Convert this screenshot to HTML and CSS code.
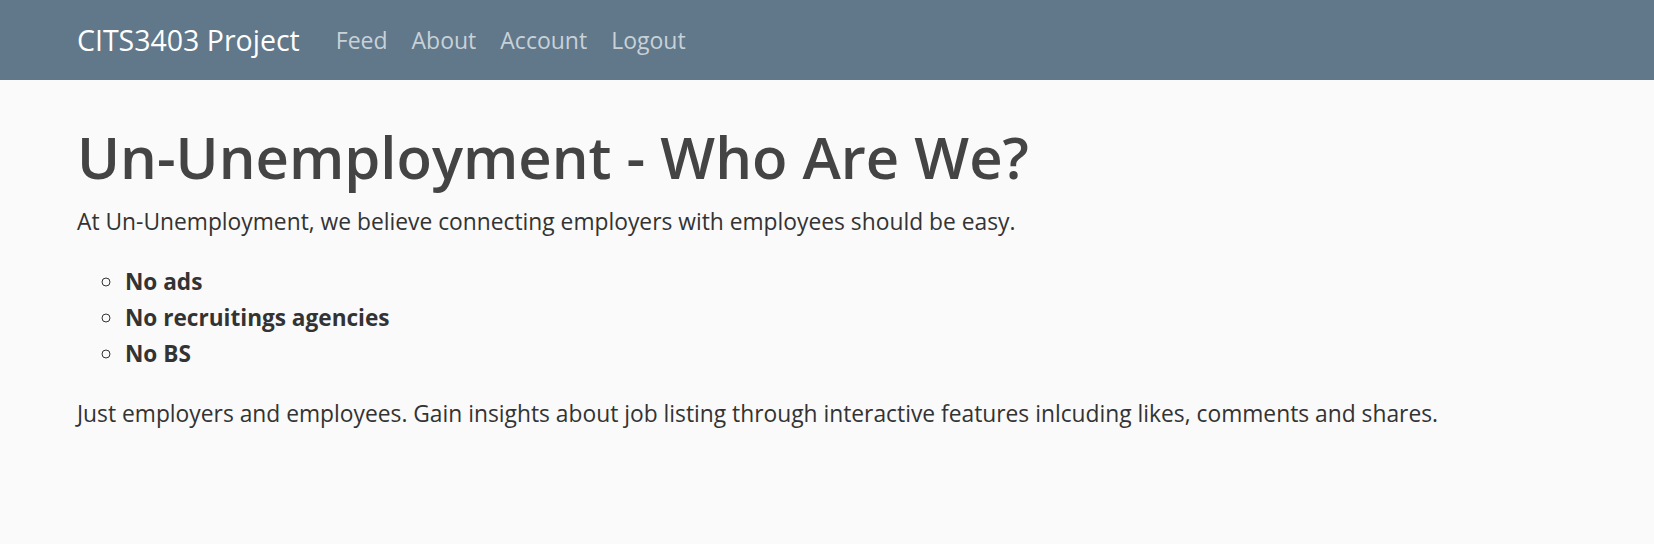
FILE: index.html
```html
<!DOCTYPE html>
<html lang="en">
<head>
<meta charset="utf-8">
<title>About - CITS3403 Project</title>
<link rel="stylesheet" href="styles.css">
</head>
<body>
<nav class="navbar">
  <a class="brand" href="#">CITS3403 Project</a>
  <ul class="nav-links">
    <li><a href="#">Feed</a></li>
    <li><a href="#">About</a></li>
    <li><a href="#">Account</a></li>
    <li><a href="#">Logout</a></li>
  </ul>
</nav>
<main class="content">
  <h1 class="title">Un-Unemployment - Who Are We?</h1>
  <p class="lead">At Un-Unemployment, we believe connecting employers with employees should be easy.</p>
  <ul class="points">
    <li><strong>No ads</strong></li>
    <li><strong>No recruitings agencies</strong></li>
    <li><strong>No BS</strong></li>
  </ul>
  <p class="lead">Just employers and employees. Gain insights about job listing through interactive features inlcuding likes, comments and shares.</p>
</main>
</body>
</html>
```

FILE: styles.css
```css
* { box-sizing: border-box; }
html, body { margin: 0; padding: 0; }
body {
  background: #fafafa;
  font-family: "Open Sans", "Noto Sans", sans-serif;
  color: #333;
  min-height: 544px;
}
.navbar {
  height: 80px;
  background: #60788a;
  display: flex;
  align-items: center;
  padding: 0 77px;
}
.brand {
  color: #fff;
  text-decoration: none;
  font-size: 28.5px;
  margin-right: 36px;
}
.nav-links {
  list-style: none;
  margin: 0;
  padding: 0;
  display: flex;
  gap: 24px;
}
.nav-links a {
  color: #c9d1d8;
  text-decoration: none;
  font-size: 23px;
}
.content {
  padding: 0 77px;
}
.title {
  margin: 42px 0 12px;
  font-size: 58px;
  font-weight: 600;
  color: #444;
  line-height: 1.2;
}
.lead {
  margin: 0;
  font-size: 22.8px;
  line-height: 36px;
}
.points {
  margin: 24px 0 24px;
  padding-left: 48px;
  list-style: circle;
  font-size: 22.6px;
  line-height: 36px;
}
.points strong { font-weight: 700; }
```
